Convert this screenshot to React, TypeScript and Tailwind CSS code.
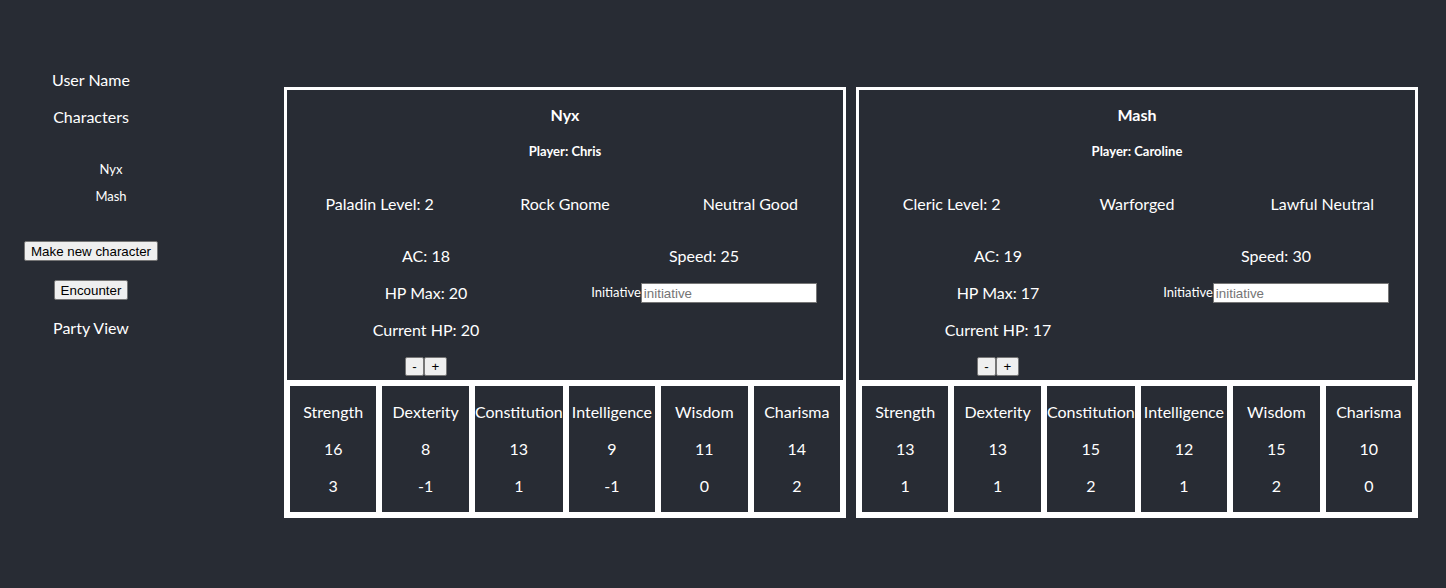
import React from 'react';

interface Character {
  name: string;
  player: string;
  className: string;
  level: number;
  race: string;
  alignment: string;
  ac: number;
  speed: number;
  hpMax: number;
  hp: number;
  stats: number[];
}

const statNames = ['Strength', 'Dexterity', 'Constitution', 'Intelligence', 'Wisdom', 'Charisma'];

const characters: Character[] = [
  {
    name: 'Nyx',
    player: 'Chris',
    className: 'Paladin',
    level: 2,
    race: 'Rock Gnome',
    alignment: 'Neutral Good',
    ac: 18,
    speed: 25,
    hpMax: 20,
    hp: 20,
    stats: [16, 8, 13, 9, 11, 14],
  },
  {
    name: 'Mash',
    player: 'Caroline',
    className: 'Cleric',
    level: 2,
    race: 'Warforged',
    alignment: 'Lawful Neutral',
    ac: 19,
    speed: 30,
    hpMax: 17,
    hp: 17,
    stats: [13, 13, 15, 12, 15, 10],
  },
];

const mod = (score: number) => Math.floor((score - 10) / 2);

const btn =
  "bg-[#efefef] text-black border border-[#767676] rounded-[2px] font-['Liberation_Sans',Arial,sans-serif] text-[13.33px] leading-[15px] px-[6px] py-[1px]";

function CharacterCard({ c }: { c: Character }) {
  return (
    <div className="w-[562px] border-[3px] border-white flex flex-col">
      {/* header / vitals */}
      <div className="border-b-[3px] border-white pb-[4px]">
        <div className="mt-[15px] h-[20px] flex items-center justify-center font-bold text-[16px]">{c.name}</div>
        <div className="mt-[17px] h-[20px] flex items-center justify-center font-bold text-[13px]">
          Player: {c.player}
        </div>
        <div className="mt-[30px] h-[20px] grid grid-cols-3 text-[16px]">
          <div className="text-center">{c.className} Level: {c.level}</div>
          <div className="text-center">{c.race}</div>
          <div className="text-center">{c.alignment}</div>
        </div>
        <div className="mt-[34px] grid grid-cols-2 text-[16px]">
          <div className="flex flex-col items-center gap-[17px]">
            <div className="h-[20px] flex items-center">AC: {c.ac}</div>
            <div className="h-[20px] flex items-center">HP Max: {c.hpMax}</div>
            <div className="h-[20px] flex items-center">Current HP: {c.hp}</div>
            <div className="h-[19px] flex">
              <button className={`${btn} w-[19px] h-[19px] px-0`}>-</button>
              <button className={`${btn} w-[23px] h-[19px] px-0`}>+</button>
            </div>
          </div>
          <div className="flex flex-col items-center gap-[17px]">
            <div className="h-[20px] flex items-center">Speed: {c.speed}</div>
            <div className="h-[20px] flex items-center">
              <label className="text-[13px]">Initiative</label>
              <input
                placeholder="initiative"
                className="w-[176px] h-[20px] bg-white border border-[#767676] px-[2px] text-black placeholder:text-[#757575] font-['Liberation_Sans',Arial,sans-serif] text-[13.33px] outline-none"
              />
            </div>
          </div>
        </div>
      </div>
      {/* ability scores */}
      <div className="flex bg-white p-[3px] gap-[6px]">
        {c.stats.map((s, i) => (
          <div key={statNames[i]} className="flex-1 bg-[#282c34] flex flex-col items-center pt-[16px] pb-[16px] gap-[17px] text-[16px]">
            <div className="h-[20px] flex items-center whitespace-nowrap">{statNames[i]}</div>
            <div className="h-[20px] flex items-center">{s}</div>
            <div className="h-[20px] flex items-center">{mod(s)}</div>
          </div>
        ))}
      </div>
    </div>
  );
}

export default function App() {
  return (
    <div className="min-h-[588px] bg-[#282c34] text-white font-['Lato','Open_Sans',sans-serif] flex">
      {/* sidebar */}
      <div className="w-[182px] flex flex-col items-center pt-[70px]">
        <div className="h-[20px] flex items-center text-[16px]">User Name</div>
        <div className="mt-[17px] h-[20px] flex items-center text-[16px]">Characters</div>
        <ul className="mt-[33px] pl-[40px] flex flex-col items-center gap-[7px] text-[13px]">
          <li className="h-[20px] flex items-center">Nyx</li>
          <li className="h-[20px] flex items-center">Mash</li>
        </ul>
        <button className={`${btn} mt-[34px] h-[20px]`}>Make new character</button>
        <button className={`${btn} mt-[19px] h-[20px]`}>Encounter</button>
        <div className="mt-[18px] h-[20px] flex items-center text-[16px]">Party View</div>
      </div>
      {/* main */}
      <div className="ml-[102px] pt-[87px] flex gap-[10px] items-start">
        {characters.map((c) => (
          <CharacterCard key={c.name} c={c} />
        ))}
      </div>
    </div>
  );
}
